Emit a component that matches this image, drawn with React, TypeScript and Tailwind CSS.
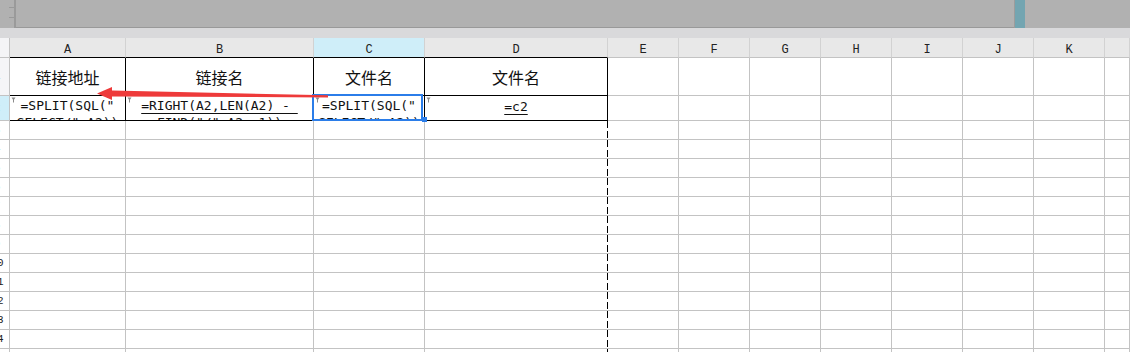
const GRID = 'border-[#c3c3c3]'

const COLS = [
  { key: 'A', w: 'w-[116px]' },
  { key: 'B', w: 'w-[188px]' },
  { key: 'C', w: 'w-[111px]' },
  { key: 'D', w: 'w-[183px]' },
  { key: 'E', w: 'w-[71px]' },
  { key: 'F', w: 'w-[71px]' },
  { key: 'G', w: 'w-[71px]' },
  { key: 'H', w: 'w-[71px]' },
  { key: 'I', w: 'w-[71px]' },
  { key: 'J', w: 'w-[71px]' },
  { key: 'K', w: 'w-[71px]' },
  { key: '', w: 'flex-1' },
]

const mono = "font-['DejaVu_Sans_Mono',monospace] text-[13px] leading-[17px] text-[#111]"

function Marker() {
  return (
    <svg className="absolute left-[1px] top-[1px]" width="5" height="6" viewBox="0 0 5 6">
      <path d="M0.5 0.5 L4.5 0.5 L2.5 3.5 Z" fill="#8a8a8a" />
      <path d="M2.5 3 L2.5 5.5" stroke="#8a8a8a" strokeWidth="1" />
    </svg>
  )
}

function RowHeader({ n, className = 'bg-white' }: { n: number; className?: string }) {
  return (
    <div className={`w-[10px] shrink-0 overflow-hidden border-r border-b ${GRID} ${className} flex items-center`}>
      <div className="w-[30px] -ml-[18px] shrink-0 text-center font-['Liberation_Mono',monospace] text-[11px] text-[#222]">
        {n}
      </div>
    </div>
  )
}

export default function App() {
  const emptyRows = Array.from({ length: 13 }, (_, i) => i + 3)

  return (
    <div className="relative w-[1130px] h-[352px] overflow-hidden bg-white">
      {/* formula bar area */}
      <div className="flex h-[28px]">
        <div className="flex w-[1015px] bg-[#b1b1b1] border-r border-[#9c9c9c]">
          <div className="w-[14px] flex flex-col items-end pt-[7px] gap-[9px]">
            <div className="w-[5px] h-px bg-[#999]" />
            <div className="w-[5px] h-px bg-[#999]" />
          </div>
          <div className="w-[2px] bg-[#9a9a9a]" />
          <div className="flex-1 border-b border-[#999]" />
        </div>
        <div className="w-[10px] bg-[#73a5b1]" />
        <div className="flex-1 bg-[#b1b1b1]" />
      </div>
      <div className="h-[10px] bg-[#d9d9db]" />

      {/* column headers */}
      <div className="flex h-[20px]">
        <div className={`w-[10px] shrink-0 bg-[#f4f4f6] border-r border-b ${GRID}`} />
        {COLS.map((c, i) => (
          <div
            key={i}
            className={`${c.w} shrink-0 border-r border-b border-r-[#d2d2d2] ${i < 4 ? 'border-b-black' : 'border-b-[#c3c3c3]'} ${
              c.key === 'C' ? 'bg-[#cfeef9]' : 'bg-[#e8e8e8]'
            } flex items-center justify-center pt-[4px] font-['Liberation_Mono',monospace] text-[12px] text-[#222]`}
          >
            {c.key}
          </div>
        ))}
      </div>

      {/* row 1 */}
      <div className="flex h-[38px]">
        <RowHeader n={1} className="bg-[#f5f5f7]" />
        {COLS.map((c, i) =>
          i < 4 ? (
            <div
              key={i}
              className={`${c.w} shrink-0 border-r border-b border-black flex items-center justify-center font-['Noto_Sans_CJK_SC',sans-serif] text-[16px] text-[#111]`}
            >
              {['链接地址', '链接名', '文件名', '文件名'][i]}
            </div>
          ) : (
            <div key={i} className={`${c.w} shrink-0 border-r border-b ${GRID}`} />
          )
        )}
      </div>

      {/* row 2 */}
      <div className="flex h-[25px]">
        <RowHeader n={2} className="bg-[#cfeef9]" />
        <div className={`relative w-[116px] shrink-0 overflow-hidden border-r border-b border-black pt-px ${mono}`}>
          <Marker />
          <div className="whitespace-pre text-center">=SPLIT(SQL("</div>
          <div className="whitespace-pre text-center">SELECT/",A2))</div>
        </div>
        <div className={`relative w-[188px] shrink-0 overflow-hidden border-r border-b border-black pt-px ${mono}`}>
          <Marker />
          <div className="whitespace-pre text-center">
            <span className="underline underline-offset-[3px]">{'=RIGHT(A2,LEN(A2) -\u00a0'}</span>
          </div>
          <div className="whitespace-pre text-center">FIND("/",A2,-1))</div>
        </div>
        <div className={`relative w-[111px] shrink-0 overflow-hidden border-r border-b border-black pt-px ${mono}`}>
          <Marker />
          <div className="whitespace-pre text-center">=SPLIT(SQL("</div>
          <div className="whitespace-pre text-center">SELECT/",A2))</div>
        </div>
        <div className={`relative w-[183px] shrink-0 overflow-hidden border-r border-b border-black pt-[2px] ${mono}`}>
          <Marker />
          <div className="whitespace-pre text-center">
            <span className="underline underline-offset-[3px]">=c2</span>
          </div>
        </div>
        {COLS.slice(4).map((c, i) => (
          <div key={i} className={`${c.w} shrink-0 border-r border-b ${GRID}`} />
        ))}
      </div>

      {/* empty rows */}
      {emptyRows.map(n => (
        <div key={n} className="flex h-[19px]">
          <RowHeader n={n} />
          {COLS.map((c, i) =>
            i === 3 ? (
              <div key={i} className={`${c.w} shrink-0 flex border-b ${GRID}`}>
                <div className="flex-1" />
                <div className="w-px bg-[repeating-linear-gradient(to_bottom,#000_0_7px,transparent_7px_10px)]" />
              </div>
            ) : (
              <div key={i} className={`${c.w} shrink-0 border-r border-b ${GRID}`} />
            )
          )}
        </div>
      ))}

      {/* selected cell C2 */}
      <div className="absolute left-[312px] top-[94px] w-[111px] h-[27px] border-2 border-[#2b7de9]" />
      <div className="absolute left-[422px] top-[117px] w-[5px] h-[5px] bg-[#2b7de9]" />

      {/* annotation arrow */}
      <svg className="absolute left-0 top-0 pointer-events-none" width="1130" height="352">
        <polygon
          points="112,87 97,93.5 112,100 112,96.4 328,97.4 328,95.3 112,90.6"
          fill="#ee3a3a"
        />
      </svg>
    </div>
  )
}
